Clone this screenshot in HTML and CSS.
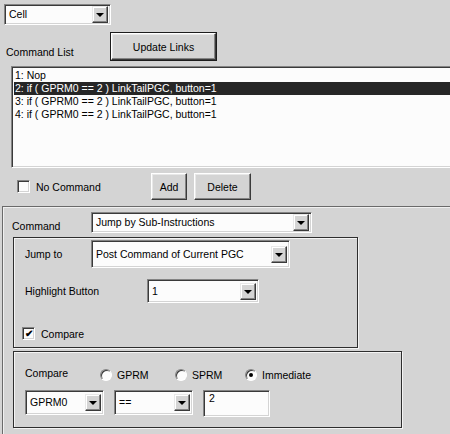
FILE: index.html
```html
<!DOCTYPE html>
<html lang="en">
<head>
  <meta charset="UTF-8">
  <title>Command Editor</title>
  <link rel="stylesheet" href="styles.css">
</head>
<body>
  <div class="combo cell-combo">
    <span class="combo-text">Cell</span>
    <span class="combo-btn"><i class="arrow"></i></span>
  </div>

  <div class="list-head">
    <span class="list-label">Command List</span>
    <button class="btn btn-default update-btn">Update Links</button>
  </div>

  <ul class="listbox">
    <li>1: Nop</li>
    <li class="selected">2: if ( GPRM0 == 2 ) LinkTailPGC, button=1</li>
    <li>3: if ( GPRM0 == 2 ) LinkTailPGC, button=1</li>
    <li>4: if ( GPRM0 == 2 ) LinkTailPGC, button=1</li>
  </ul>

  <div class="actions">
    <span class="check"></span>
    <span class="check-label nocmd-label">No Command</span>
    <button class="btn add-btn">Add</button>
    <button class="btn delete-btn">Delete</button>
  </div>

  <div class="panel">
    <div class="cmd-row">
      <span class="cmd-label">Command</span>
      <div class="combo cmd-combo">
        <span class="combo-text">Jump by Sub-Instructions</span>
        <span class="combo-btn"><i class="arrow"></i></span>
      </div>
    </div>

    <div class="group jump-group">
      <div class="jump-row">
        <span class="field-label jump-label">Jump to</span>
        <div class="combo jump-combo">
          <span class="combo-text">Post Command of Current PGC</span>
          <span class="combo-btn"><i class="arrow"></i></span>
        </div>
      </div>
      <div class="hl-row">
        <span class="field-label hl-label">Highlight Button</span>
        <div class="combo hl-combo">
          <span class="combo-text">1</span>
          <span class="combo-btn"><i class="arrow"></i></span>
        </div>
      </div>
      <div class="compare-check">
        <span class="check checked">&#10004;</span>
        <span class="check-label">Compare</span>
      </div>
    </div>

    <div class="group compare-group">
      <div class="radio-row">
        <span class="field-label cmp-label">Compare</span>
        <span class="radio"></span><span class="radio-label gprm">GPRM</span>
        <span class="radio"></span><span class="radio-label sprm">SPRM</span>
        <span class="radio on"></span><span class="radio-label">Immediate</span>
      </div>
      <div class="value-row">
        <div class="combo reg-combo">
          <span class="combo-text">GPRM0</span>
          <span class="combo-btn"><i class="arrow"></i></span>
        </div>
        <div class="combo op-combo">
          <span class="combo-text">==</span>
          <span class="combo-btn"><i class="arrow"></i></span>
        </div>
        <div class="textbox">2</div>
      </div>
    </div>
  </div>
</body>
</html>
```

FILE: styles.css
```css
body {
  margin: 0;
  background: #d4d4d4;
  font-family: 'Liberation Sans', Arial, sans-serif;
  font-size: 10.5px;
  color: #000;
  overflow: hidden;
  width: 450px;
  height: 434px;
}

/* sunken white field */
.combo,
.listbox,
.textbox {
  box-sizing: border-box;
  background: #fcfcfc;
  border: 1px solid;
  border-color: #848484 #fff #fff #848484;
  box-shadow: inset 1px 1px 0 #3a3a3a, inset -1px -1px 0 #d4d4d4;
}

.combo {
  display: flex;
  align-items: center;
  justify-content: space-between;
  height: 21px;
  padding: 2px;
}

.combo-text {
  padding-left: 2px;
  line-height: 13px;
  white-space: nowrap;
}

.combo-btn {
  box-sizing: border-box;
  width: 16px;
  height: 17px;
  background: #d4d4d4;
  border: 1px solid;
  border-color: #e8e8e8 #3a3a3a #3a3a3a #e8e8e8;
  box-shadow: inset -1px -1px 0 #848484, inset 1px 1px 0 #fff;
  display: flex;
  align-items: center;
  justify-content: center;
  flex-shrink: 0;
}

.arrow {
  width: 0;
  height: 0;
  border-left: 4px solid transparent;
  border-right: 4px solid transparent;
  border-top: 4px solid #000;
  margin-top: 1px;
}

.btn {
  box-sizing: border-box;
  height: 27px;
  padding: 0;
  font: inherit;
  color: #000;
  background: #d4d4d4;
  border: 1px solid;
  border-color: #fff #3a3a3a #3a3a3a #fff;
  box-shadow: inset -1px -1px 0 #848484, inset 1px 1px 0 #e8e8e8;
}

.btn-default {
  outline: 1px solid #1c1c1c;
  outline-offset: 0;
}

.cell-combo {
  width: 107px;
  margin: 4px 0 0 4px;
}

.list-head {
  display: flex;
  align-items: flex-end;
  margin-top: 8px;
  height: 27px;
}

.list-label {
  width: 111px;
  padding-left: 6px;
  box-sizing: border-box;
  line-height: 13px;
  margin-bottom: 1px;
}

.update-btn {
  width: 105px;
}

.listbox {
  list-style: none;
  margin: 6px 0 0 11px;
  padding: 2px 2px;
  width: 445px;
  height: 102px;
}

.listbox li {
  height: 13px;
  line-height: 13px;
  padding-left: 1px;
  white-space: nowrap;
}

.listbox li.selected {
  background: #262626;
  color: #fff;
}

.actions {
  display: flex;
  align-items: center;
  margin-top: 5px;
  height: 27px;
}

.check {
  box-sizing: border-box;
  width: 13px;
  height: 13px;
  background: #fcfcfc;
  border: 1px solid;
  border-color: #848484 #fff #fff #848484;
  box-shadow: inset 1px 1px 0 #3a3a3a, inset -1px -1px 0 #d4d4d4;
  font-size: 10px;
  line-height: 11px;
  text-align: center;
  font-weight: bold;
  flex-shrink: 0;
}

.actions .check {
  margin-left: 17px;
}

.check-label {
  margin-left: 6px;
}

.nocmd-label {
  width: 115px;
}

.add-btn {
  width: 36px;
}

.delete-btn {
  width: 57px;
  margin-left: 7px;
}

.panel {
  margin: 6px 0 0 2px;
  height: 240px;
  border-top: 1px solid #6a6a6a;
  border-left: 1px solid #6a6a6a;
  box-shadow: inset 1px 1px 0 #f0f0f0;
}

.cmd-row {
  display: flex;
  align-items: flex-end;
  padding-top: 5px;
}

.cmd-label {
  width: 79px;
  padding-left: 9px;
  line-height: 13px;
}

.cmd-combo {
  width: 221px;
}

.group {
  box-sizing: border-box;
  margin-left: 10px;
  border: 1px solid #2e2e2e;
  box-shadow: 1px 1px 0 #f4f4f4, inset 1px 1px 0 #f4f4f4;
}

.jump-group {
  width: 345px;
  height: 111px;
  margin-top: 4px;
}

.field-label {
  line-height: 13px;
  padding-left: 11px;
  box-sizing: border-box;
}

.jump-row {
  display: flex;
  align-items: center;
  margin-top: 2px;
}

.jump-label {
  width: 77px;
}

.jump-combo {
  width: 199px;
  height: 28px;
}

.hl-row {
  display: flex;
  align-items: center;
  margin-top: 11px;
}

.hl-label {
  width: 133px;
}

.hl-combo {
  width: 112px;
  height: 24px;
}

.compare-check {
  display: flex;
  align-items: center;
  margin: 24px 0 0 8px;
}

.compare-group {
  width: 389px;
  height: 77px;
  margin-top: 3px;
}

.radio-row {
  display: flex;
  align-items: center;
  margin-top: 13px;
}

.cmp-label {
  width: 86px;
}

.radio {
  box-sizing: border-box;
  width: 12px;
  height: 12px;
  border-radius: 50%;
  background: #fcfcfc;
  border: 1px solid;
  border-color: #848484 #fff #fff #848484;
  box-shadow: inset 1px 1px 0 #3a3a3a;
  position: relative;
  margin-top: 3px;
}

.radio.on::after {
  content: "";
  position: absolute;
  left: 3px;
  top: 3px;
  width: 4px;
  height: 4px;
  border-radius: 50%;
  background: #000;
}

.radio-label {
  margin-left: 5px;
  margin-top: 4px;
}

.gprm {
  width: 58px;
}

.sprm {
  width: 53px;
}

.value-row {
  display: flex;
  align-items: flex-start;
  margin: 9px 0 0 11px;
}

.reg-combo {
  width: 79px;
  height: 25px;
}

.op-combo {
  width: 79px;
  height: 25px;
  margin-left: 10px;
}

.textbox {
  width: 67px;
  height: 27px;
  margin-left: 10px;
  padding: 1px 0 0 5px;
  line-height: 13px;
}
```
